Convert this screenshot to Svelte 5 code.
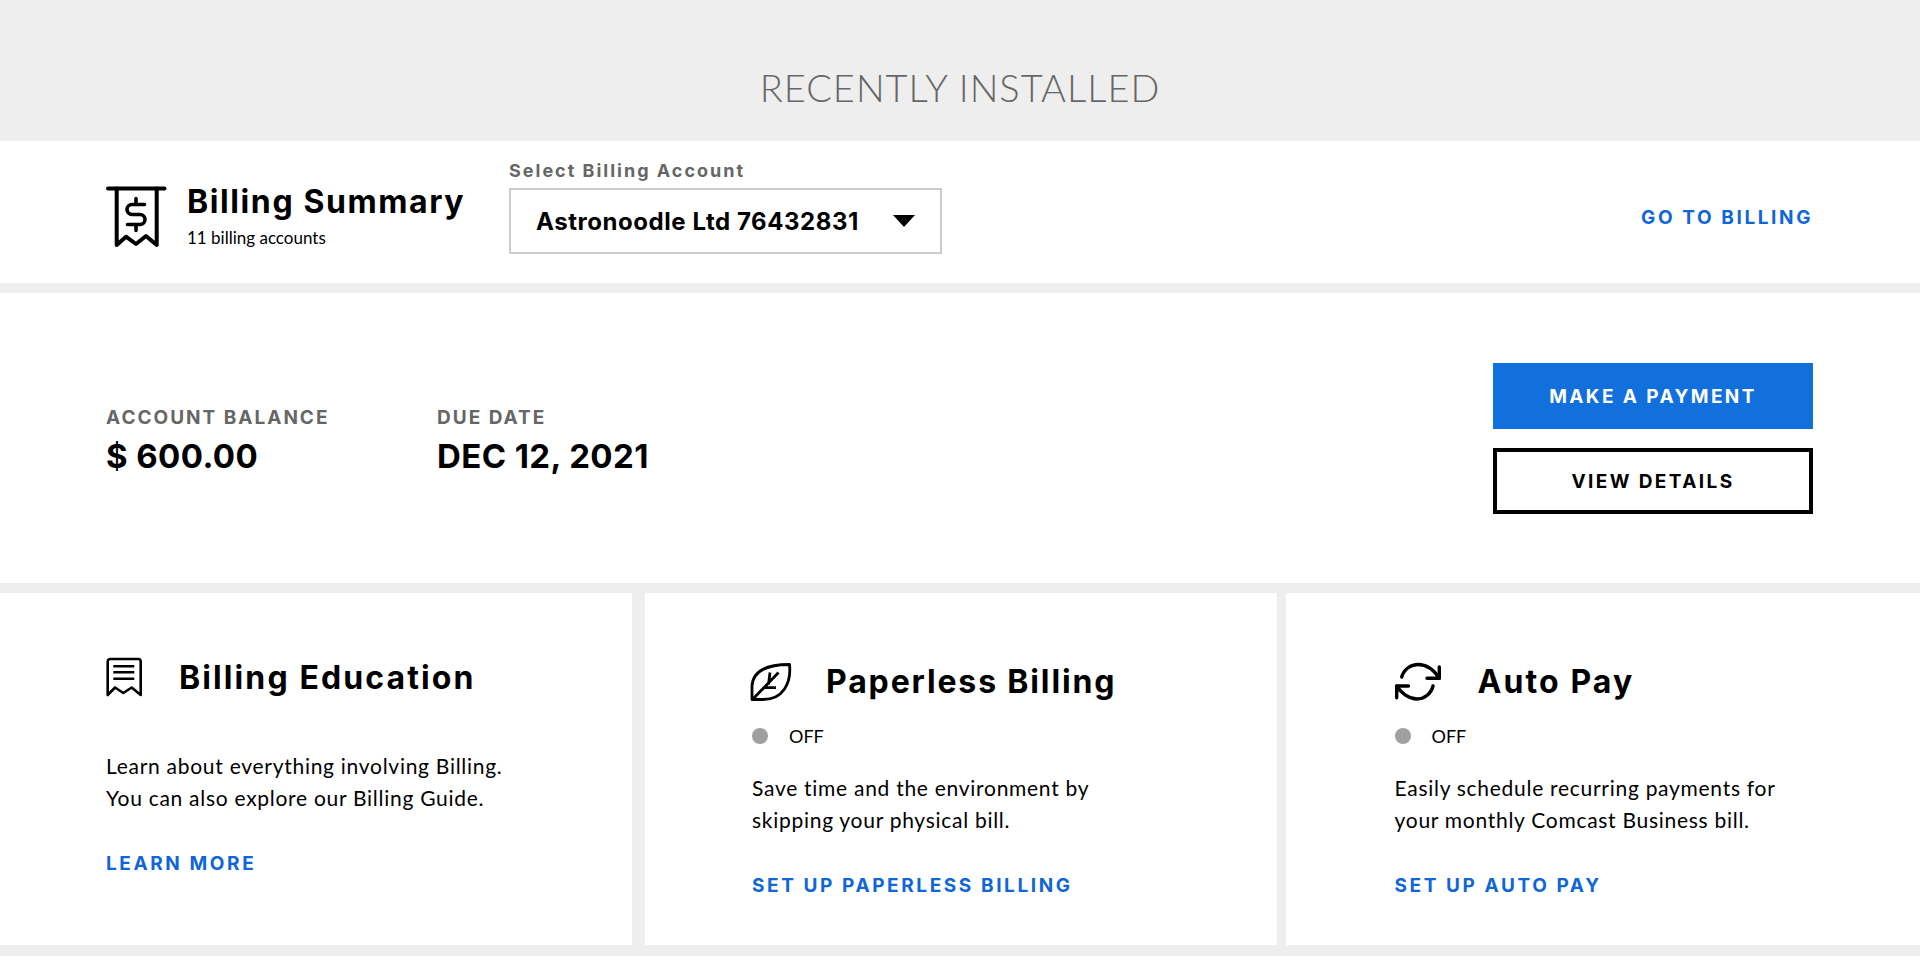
<script>
    const cards = [
        { title: 'Billing Education', icon: 'receipt', lines: ['Learn about everything involving Billing.', 'You can also explore our Billing Guide.'], link: 'LEARN MORE' },
        { title: 'Paperless Billing', icon: 'leaf', status: 'OFF', lines: ['Save time and the environment by', 'skipping your physical bill.'], link: 'SET UP PAPERLESS BILLING' },
        { title: 'Auto Pay', icon: 'sync', status: 'OFF', lines: ['Easily schedule recurring payments for', 'your monthly Comcast Business bill.'], link: 'SET UP AUTO PAY' }
    ];
</script>

<div class="page">
    <header class="top">
        <h2>RECENTLY INSTALLED</h2>
    </header>

    <section class="summary">
        <svg class="summary-icon" width="62" height="62" viewBox="0 0 62 62" fill="none" stroke="#000" stroke-width="4" stroke-linecap="round" stroke-linejoin="round">
            <path d="M2 2.5H58.500" />
            <path d="M10.700 2.500V59L20 50.700L30 58L40 50L50.700 59V2.500" />
            <path stroke-width="3.600" d="M38.500 18.500H26a5 5 0 0 0 0 10h8a5 5 0 0 1 0 10H21.500" />
            <path stroke-width="3.600" d="M30 12.500V18.500M30 38.500V44.500" />
        </svg>
        <div class="summary-title">
            <h1>Billing Summary</h1>
            <p>11 billing accounts</p>
        </div>
        <div class="account">
            <span class="account-label">Select Billing Account</span>
            <div class="select">
                <span>Astronoodle Ltd 76432831</span>
                <i class="caret"></i>
            </div>
        </div>
        <a class="link go" href="#billing">GO TO BILLING</a>
    </section>

    <section class="balance">
        <div class="figure balance-col">
            <span>ACCOUNT BALANCE</span>
            <strong>$ 600.00</strong>
        </div>
        <div class="figure">
            <span>DUE DATE</span>
            <strong>DEC 12, 2021</strong>
        </div>
        <div class="actions">
            <button class="primary">MAKE A PAYMENT</button>
            <button class="secondary">VIEW DETAILS</button>
        </div>
    </section>

    <section class="cards">
        {#each cards as card}
            <article class="card {card.icon}">
                <div class="card-head">
                    {#if card.icon === 'receipt'}
                        <svg width="38" height="40" viewBox="0 0 38 40" fill="none" stroke="#000" stroke-width="2.600" stroke-linejoin="round">
                            <path d="M2.700 38V4.500a2.500 2.500 0 0 1 2.500-2.500H33.200a2.500 2.500 0 0 1 2.500 2.500V38L26.700 30.500L18.300 36L10 30.500Z" />
                            <path d="M8.300 9.300H29.300M8.300 15.300H29.300M8.300 21.700H29.300" />
                        </svg>
                    {:else if card.icon === 'leaf'}
                        <svg width="44" height="42" viewBox="0 0 44 42" fill="none" stroke="#000" stroke-width="2.800" stroke-linejoin="round">
                            <path d="M40.500 3.500C25 3.500 4 6 3 25V38.500H14C34 38.500 42.500 22 40.500 3.500Z" />
                            <path d="M4 38L29.500 11.500M21 11.500L19.500 23.500M15.500 26.700H27" />
                        </svg>
                    {:else}
                        <svg width="48" height="42" viewBox="0 0 48 42" fill="none" stroke="#000" stroke-width="3.400" stroke-linecap="round" stroke-linejoin="round">
                            <path d="M7.700 16C10 8 17 3.500 24 3.500C32 3.500 40 9 45.300 17.300" />
                            <path d="M45.300 6V17.300H33" />
                            <path d="M39 25C37 33 30 38 23 38C15 38 7 32 2.700 25" />
                            <path d="M2.700 36.700V25H14.500" />
                        </svg>
                    {/if}
                    <h3>{card.title}</h3>
                </div>
                {#if card.status}
                    <div class="status"><i></i><span>{card.status}</span></div>
                {/if}
                <p class="body">{card.lines[0]}<br />{card.lines[1]}</p>
                <a class="link" href="#card">{card.link}</a>
            </article>
        {/each}
    </section>
</div>

<style>
    :global(body) {
        margin: 0;
        background: #eeeeee;
    }

    .page {
        height: 956px;
        overflow: hidden;
        background: #eeeeee;
        font-family: "Lato", "Liberation Sans", sans-serif;
        color: #000;
    }

    .top {
        height: 141px;
        display: flex;
        align-items: center;
        justify-content: center;
        padding-top: 32px;
        box-sizing: border-box;
    }

    .top h2 {
        margin: 0;
        font-weight: 300;
        font-size: 38px;
        line-height: 46px;
        letter-spacing: 1px;
        color: #666;
    }

    .summary {
        height: 142px;
        margin-bottom: 10px;
        background: #fff;
        display: flex;
        align-items: flex-start;
        padding: 0 107px 0 106px;
        box-sizing: border-box;
    }

    .summary-icon {
        margin-top: 45px;
        flex-shrink: 0;
    }

    .summary-title {
        margin: 43px 0 0 19px;
        width: 322px;
    }

    h1, h3 {
        font-family: "Inter", "Liberation Sans", sans-serif;
        font-weight: 700;
        margin: 0;
    }

    .summary-title h1 {
        font-size: 32px;
        line-height: 36px;
        letter-spacing: 1.600px;
        white-space: nowrap;
    }

    .summary-title p {
        margin: 7px 0 0;
        font-size: 17px;
        line-height: 22px;
    }

    .account {
        margin-top: 20px;
        width: 433px;
    }

    .account-label {
        display: block;
        font-family: "Inter", sans-serif;
        font-weight: 700;
        font-size: 18px;
        line-height: 20px;
        letter-spacing: 2px;
        color: #666;
        margin-bottom: 7px;
    }

    .select {
        height: 66px;
        box-sizing: border-box;
        border: 2px solid #ccc;
        display: flex;
        align-items: center;
        justify-content: space-between;
        padding: 0 25px;
        font-family: "Inter", sans-serif;
        font-weight: 700;
        font-size: 24px;
        letter-spacing: 0.550px;
    }

    .caret {
        width: 0;
        height: 0;
        border-left: 11px solid transparent;
        border-right: 11px solid transparent;
        border-top: 12px solid #000;
    }

    .link {
        font-family: "Inter", sans-serif;
        font-weight: 700;
        font-size: 19px;
        line-height: 20px;
        letter-spacing: 2.600px;
        color: #0f66d8;
        text-decoration: none;
    }

    .go {
        margin: 67px 0 0 auto;
    }

    .balance {
        height: 290px;
        margin-bottom: 10px;
        background: #fff;
        display: flex;
        align-items: center;
        padding: 0 107px 0 106px;
        box-sizing: border-box;
    }

    .figure {
        display: flex;
        flex-direction: column;
        margin-top: 7px;
    }

    .balance-col {
        width: 331px;
    }

    .figure span {
        font-family: "Inter", sans-serif;
        font-weight: 700;
        font-size: 19px;
        line-height: 22px;
        letter-spacing: 2px;
        color: #666;
    }

    .figure strong {
        font-family: "Inter", sans-serif;
        font-weight: 700;
        font-size: 33px;
        line-height: 40px;
        margin-top: 7px;
        letter-spacing: 0.400px;
    }

    .actions {
        margin-left: auto;
        width: 320px;
        display: flex;
        flex-direction: column;
        gap: 19px;
    }

    .actions button {
        height: 66px;
        box-sizing: border-box;
        padding-top: 2px;
        font-family: "Inter", sans-serif;
        font-weight: 700;
        font-size: 19px;
        letter-spacing: 2.400px;
        cursor: pointer;
    }

    .primary {
        background: #1270dd;
        color: #fff;
        border: 0;
    }

    .secondary {
        background: #fff;
        color: #000;
        border: 4px solid #000;
    }

    .cards {
        display: flex;
        height: 352px;
    }

    .card {
        background: #fff;
        box-sizing: border-box;
        padding-top: 64px;
        width: 632px;
    }

    .card.receipt {
        padding-left: 106px;
    }

    .card.leaf {
        margin-left: 13px;
        padding-left: 107px;
    }

    .card.sync {
        margin-left: 9px;
        width: 634px;
        padding-left: 108.500px;
    }

    .card-head {
        display: flex;
        align-items: center;
        height: 50px;
    }

    .card.receipt .card-head {
        height: 40px;
    }

    .card h3 {
        font-size: 32px;
        line-height: 40px;
        letter-spacing: 2.100px;
    }

    .card.receipt h3 {
        margin-left: 36px;
        position: relative;
        top: 1px;
    }

    .card.leaf h3 {
        margin-left: 33px;
        letter-spacing: 1.850px;
    }

    .card.sync h3 {
        margin-left: 36px;
    }

    .card.receipt svg {
        margin-left: -1px;
    }

    .card.leaf svg {
        margin-left: -3px;
    }

    .card.sync svg {
        margin-left: -1px;
    }

    .status {
        display: flex;
        align-items: center;
        gap: 21px;
        margin-top: 19px;
        height: 20px;
        font-size: 18px;
    }

    .status i {
        width: 16px;
        height: 16px;
        border-radius: 50%;
        background: #a0a0a0;
    }

    .body {
        margin: 26px 0 40px;
        font-size: 21px;
        line-height: 32px;
        letter-spacing: 0.720px;
    }

    .card.receipt .body {
        margin: 53px 0 40px;
    }

    .card .link {
        display: block;
    }
</style>
